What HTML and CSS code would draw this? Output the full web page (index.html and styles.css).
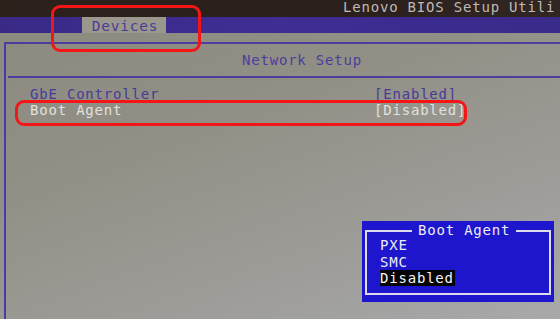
FILE: index.html
```html
<!DOCTYPE html>
<html>
<head>
<meta charset="utf-8">
<link rel="stylesheet" href="styles.css">
</head>
<body>
<div class="screen">
  <div class="topbar"><span class="title">Lenovo BIOS Setup Utili</span></div>
  <div class="menubar"><div class="tab">Devices</div></div>
  <div class="content">
    <div class="frame">
      <div class="heading">Network Setup</div>
      <div class="rows">
        <div class="row"><span class="label">GbE Controller</span><span class="value">[Enabled]</span></div>
        <div class="row sel"><span class="label">Boot Agent</span><span class="value">[Disabled]</span></div>
      </div>
    </div>
  </div>
  <div class="popup">
    <div class="popup-box">
      <div class="popup-title">Boot Agent</div>
      <div class="opt">PXE</div>
      <div class="opt">SMC</div>
      <div class="opt"><span class="hl">Disabled</span></div>
    </div>
  </div>
  <div class="mark mark-tab"></div>
  <div class="mark mark-row"></div>
</div>
</body>
</html>
```

FILE: styles.css
```css
html, body {
  margin: 0;
  padding: 0;
  background: #1a1410;
}
.screen {
  position: relative;
  width: 560px;
  height: 319px;
  overflow: hidden;
  display: flex;
  flex-direction: column;
  font-family: "DejaVu Sans Mono", "Liberation Mono", monospace;
  font-size: 14px;
  letter-spacing: 0.8px;
}
.topbar {
  height: 17px;
  background: linear-gradient(90deg, #2c211b 0%, #2a1f1b 60%, #302624 100%);
  display: flex;
  align-items: center;
  padding-left: 343px;
  white-space: nowrap;
  overflow: hidden;
}
.title {
  color: #bfbab4;
  margin-top: -4px;
}
.menubar {
  height: 16px;
  background: linear-gradient(90deg, #3a2a86 0%, #3f2d94 50%, #3a2a8a 100%);
  display: flex;
  padding-left: 82px;
}
.tab {
  width: 84px;
  height: 17px;
  background: #9a978c;
  color: #4b3d98;
  display: flex;
  align-items: center;
  justify-content: center;
  box-sizing: border-box;
  padding-left: 2px;
  font-size: 14.5px;
}
.content {
  flex: 1;
  background: linear-gradient(160deg, #8d8b80 0%, #929086 35%, #9d9c98 70%, #a9a9ab 100%);
  padding-top: 9px;
  padding-left: 4px;
}
.frame {
  height: 100%;
  border-left: 2px solid #4a3aa8;
  border-top: 2px solid #4d3e9e;
}
.heading {
  height: 32px;
  border-bottom: 2px solid #4d3e9e;
  display: flex;
  align-items: center;
  padding-left: 234px;
  color: #4a3d9e;
  margin-left: 2px;
}
.rows {
  padding-top: 8px;
  padding-left: 24px;
}
.row {
  height: 16px;
  display: grid;
  grid-template-columns: 344px auto;
  align-items: center;
  color: #473a98;
  white-space: nowrap;
}
.row.sel {
  color: #e2e1dd;
}
.popup {
  position: absolute;
  left: 362px;
  top: 221px;
  width: 192px;
  height: 81px;
  background: #1d16cc;
  padding: 9px 3px 7px 3px;
  box-sizing: border-box;
}
.popup-box {
  position: relative;
  height: 100%;
  border: 2px solid #dcdcec;
  box-sizing: border-box;
  padding: 5px 0 0 13px;
  color: #ececf4;
}
.popup-title {
  position: absolute;
  top: -10px;
  left: 45px;
  padding: 0 6px;
  background: #1d16cc;
  line-height: 16px;
}
.opt {
  height: 16.5px;
  line-height: 16px;
  white-space: nowrap;
}
.hl {
  background: #050505;
  color: #f4f4f4;
  display: inline-block;
  line-height: 16px;
  padding-right: 1px;
}
.mark {
  position: absolute;
  border: 3px solid #f21616;
  border-radius: 9px;
  box-sizing: border-box;
}
.mark-tab {
  left: 51px;
  top: 5px;
  width: 150px;
  height: 47px;
}
.mark-row {
  left: 15px;
  top: 100px;
  width: 452px;
  height: 26px;
}
```
